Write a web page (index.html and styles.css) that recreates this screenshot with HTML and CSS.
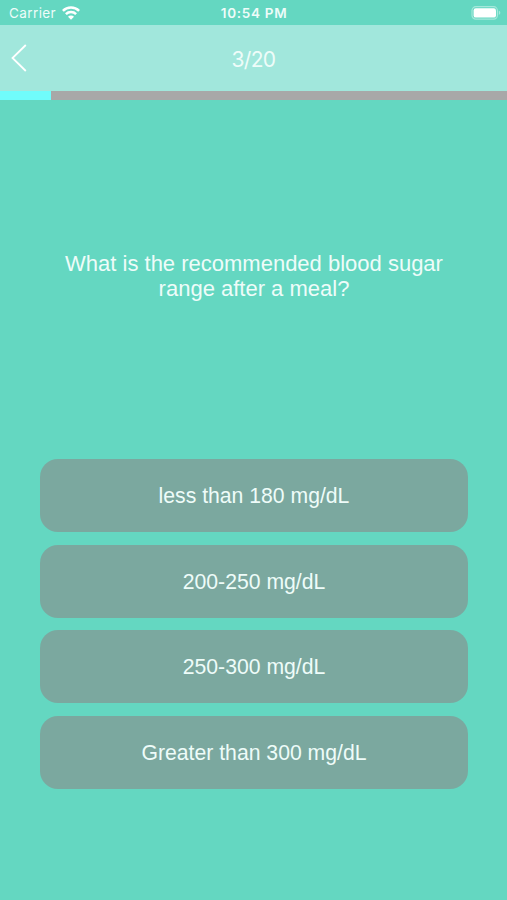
FILE: index.html
```html
<!DOCTYPE html>
<html lang="en">
<head>
    <meta charset="UTF-8">
    <meta name="viewport" content="width=device-width, initial-scale=1.0">
    <title>Quiz</title>
    <link rel="stylesheet" href="styles.css">
</head>
<body>
    <div class="status-bar">
        <div class="status-left">
            <span class="carrier">Carrier</span>
            <svg class="wifi-icon" viewBox="0 0 18 14">
                <path d="M.9 4.9a11.5 11.5 0 0 1 16.2 0M3.9 8.2a7.2 7.2 0 0 1 10.2 0"/>
                <path class="wifi-dot" d="M9 13.7L6 10.7a4.2 4.2 0 0 1 6 0z"/>
            </svg>
        </div>
        <span class="time">10:54 PM</span>
        <div class="status-right">
            <svg class="battery-icon" viewBox="0 0 30 14">
                <rect class="battery-case" x="1" y=".7" width="25.4" height="12.4" rx="3.8"/>
                <rect class="battery-level" x="2.6" y="2.2" width="22.4" height="9.4" rx="2.2"/>
                <path class="battery-cap" d="M27.8 4.8c2 .7 2 3.5 0 4.2z"/>
            </svg>
        </div>
    </div>

    <header class="nav-bar">
        <button class="back-button" aria-label="Back">
            <svg viewBox="0 0 16 28">
                <path d="M14.8 1L1.5 14l13.3 13"/>
            </svg>
        </button>
        <h1 class="nav-title">3/20</h1>
    </header>

    <div class="progress">
        <div class="progress-fill"></div>
    </div>

    <main class="quiz">
        <p class="question">What is the recommended blood sugar range after a meal?</p>

        <div class="answers">
            <button class="answer">less than 180 mg/dL</button>
            <button class="answer">200-250 mg/dL</button>
            <button class="answer">250-300 mg/dL</button>
            <button class="answer">Greater than 300 mg/dL</button>
        </div>
    </main>
</body>
</html>
```
FILE: styles.css
```css
* {
    margin: 0;
    padding: 0;
    box-sizing: border-box;
}

body {
    font-family: "Liberation Sans", Arial, sans-serif;
    background: #64d7c1;
    color: #eefcf9;
    height: 100vh;
    display: flex;
    flex-direction: column;
    overflow: hidden;
}

button {
    border: none;
    background: none;
    color: inherit;
    font-family: inherit;
    cursor: pointer;
}

/* Status bar */
.status-bar {
    display: grid;
    grid-template-columns: 1fr auto 1fr;
    align-items: center;
    height: 25px;
    padding: 1px 8px 0 9px;
    font-family: Inter, sans-serif;
    font-size: 13px;
    line-height: 16px;
}

.status-left {
    display: flex;
    align-items: center;
    gap: 6px;
}

.carrier {
    font-size: 13.5px;
    letter-spacing: 0.4px;
}

.wifi-icon {
    width: 18px;
    height: 14px;
    fill: none;
    stroke: #fff;
    stroke-width: 2.5;
}

.wifi-icon .wifi-dot {
    fill: #fff;
    stroke: none;
}

.time {
    font-size: 13.5px;
    font-weight: 600;
    letter-spacing: 0.7px;
}

.status-right {
    display: flex;
    justify-content: flex-end;
    margin-right: -2px;
}

.battery-icon {
    width: 30px;
    height: 14px;
}

.battery-case {
    fill: none;
    stroke: #a5e8db;
    stroke-width: 1.2;
}

.battery-level {
    fill: #fff;
}

.battery-cap {
    fill: #a5e8db;
}

/* Navigation */
.nav-bar {
    display: grid;
    grid-template-columns: 1fr auto 1fr;
    align-items: center;
    height: 66px;
    padding: 0 11px;
    background: #a1e7dc;
}

.back-button {
    display: flex;
    width: 16px;
    height: 28px;
}

.back-button svg {
    width: 16px;
    height: 28px;
    fill: none;
    stroke: #fff;
    stroke-width: 1.8;
}

.nav-title {
    padding-top: 2px;
    font-family: Inter, sans-serif;
    font-size: 21px;
    font-weight: 400;
    letter-spacing: -0.7px;
}

.progress {
    height: 9px;
    background: #a8a8a8;
}

.progress-fill {
    width: 10%;
    height: 100%;
    background: #70fcfb;
}

/* Question and answers */
.quiz {
    flex: 1;
    display: flex;
    flex-direction: column;
    justify-content: space-between;
    padding: 151px 39px 111.4px 40px;
}

.question {
    padding: 0 20px;
    font-size: 22px;
    line-height: 25px;
    text-align: center;
}

.answers {
    display: flex;
    flex-direction: column;
    gap: 12.4px;
}

.answer {
    height: 73px;
    padding-top: 1px;
    border-radius: 18px;
    background: #7ba89f;
    font-size: 21.2px;
}
```
